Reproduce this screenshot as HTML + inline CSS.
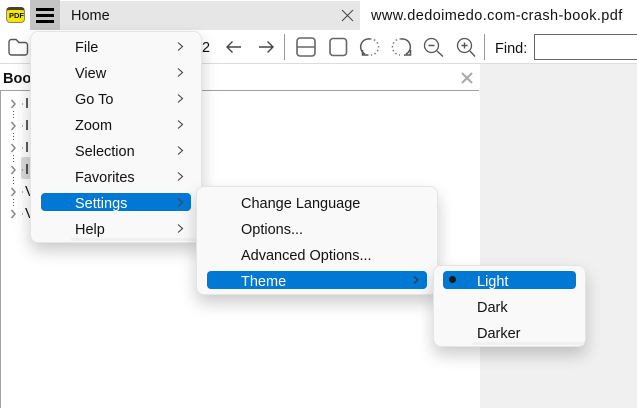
<!DOCTYPE html>
<html><head><meta charset="utf-8">
<style>
*{box-sizing:border-box}
html,body{margin:0;padding:0;width:637px;height:408px;overflow:hidden;background:#fff;font-family:"Liberation Sans",sans-serif;font-size:14.5px;color:#111}
.a{position:absolute}
.t{position:absolute;white-space:nowrap;line-height:18px;margin-top:1px}
.menu{position:absolute;background:#f9f9f9;border:1px solid #e4e4e4;border-radius:8px;box-shadow:0 8px 16px rgba(0,0,0,.2)}
.hl{position:absolute;background:#0078d4;border-radius:4px}
svg{position:absolute;overflow:visible}
</style></head><body>
<div class="a" style="left:60px;top:1px;width:300px;height:29px;background:#e6e6e6"></div>
<div class="a" style="left:30px;top:0;width:30px;height:30px;background:#c4c4c4"></div>
<div class="a" style="left:36px;top:8px;width:18px;height:3px;background:#000"></div>
<div class="a" style="left:36px;top:14px;width:18px;height:3px;background:#000"></div>
<div class="a" style="left:36px;top:20px;width:18px;height:3px;background:#000"></div>
<div class="a" style="left:6px;top:7px;width:19px;height:16px;background:#f7e600;border:1px solid #8a8a60;border-top:3px solid #4a4520;border-radius:4px"></div>
<div class="a" style="left:9px;top:10px;font-size:7.500px;font-weight:bold;line-height:12px;color:#1a1a00;white-space:nowrap">PDF</div>
<div class="t" style="left:71px;top:6px">Home</div>
<svg style="left:0;top:0" width="637" height="90" fill="none">
<path d="M342 10L353 21M353 10L342 21" stroke="#444" stroke-width="1"/>
<path d="M9 42a2.500 2.500 0 0 1 2.500-2.500H16l3 3h6A2.500 2.500 0 0 1 27.500 45V52.500a2.500 2.500 0 0 1-2.500 2.500H11.500A2.500 2.500 0 0 1 9 52.500Z" stroke="#555" stroke-width="1.400"/>
<path d="M241 47H227M232.500 41.500L227 47L232.500 52.500" stroke="#444" stroke-width="1.400"/>
<path d="M259 47H273M267.500 41.500L273 47L267.500 52.500" stroke="#444" stroke-width="1.400"/>
<path d="M284.500 34V60" stroke="#999" stroke-width="1"/>
<rect x="297" y="38" width="18" height="18" rx="3" stroke="#666" stroke-width="1.600"/>
<path d="M297 47H315" stroke="#666" stroke-width="1.600"/>
<rect x="330" y="38.500" width="16.500" height="17" rx="3" stroke="#666" stroke-width="1.600"/>
<path d="M365 54A8 8 0 0 1 370 39" stroke="#555" stroke-width="1.500"/>
<path d="M370 39A8 8 0 0 1 371 55" stroke="#777" stroke-width="1.500" stroke-dasharray="1.500 2.500"/>
<path d="M362.500 50V55H368.500" stroke="#555" stroke-width="1.500"/>
<path d="M406 54A8 8 0 0 0 401 39" stroke="#555" stroke-width="1.500"/>
<path d="M401 39A8 8 0 0 0 400 55" stroke="#777" stroke-width="1.500" stroke-dasharray="1.500 2.500"/>
<path d="M410.500 50V55H404" stroke="#555" stroke-width="1.500"/>
<circle cx="431.500" cy="45.500" r="7" stroke="#555" stroke-width="1.300"/><path d="M428.500 45.500H434.500M437 51L443 56.500" stroke="#555" stroke-width="1.400"/>
<circle cx="464.500" cy="45.500" r="7" stroke="#555" stroke-width="1.300"/><path d="M461.500 45.500H467.500M464.500 42.500V48.500M470 51L475 56.500" stroke="#555" stroke-width="1.400"/>
<path d="M484.500 34V60" stroke="#999" stroke-width="1"/>
<path d="M462 73L472 83M472 73L462 83" stroke="#aaa" stroke-width="2"/>
</svg>
<div class="t" style="left:371px;top:6px;letter-spacing:.41px">www.dedoimedo.com-crash-book.pdf</div>
<div class="t" style="left:495px;top:39px">Find:</div>
<div class="a" style="left:534px;top:34px;width:103px;height:26px;border:1px solid #666;border-right:0;background:#fff"></div>
<div class="t" style="left:202px;top:38px;font-size:14.500px">2</div>
<div class="a" style="left:0;top:63px;width:637px;height:1px;background:#ddd"></div>
<div class="a" style="left:480px;top:64px;width:157px;height:344px;background:#f0f0f0"></div>
<div class="t" style="left:3px;top:69px;font-weight:bold">Boo</div>
<div class="a" style="left:0;top:90px;width:479px;height:1px;background:#a0a0a0"></div>
<div class="a" style="left:0;top:90px;width:1px;height:318px;background:#a0a0a0"></div>
<div class="a" style="left:21px;top:157px;width:10px;height:22px;background:#d9d9d9;border-radius:2px"></div>
<svg style="left:0;top:0" width="32" height="230" fill="none">
<path d="M11.500 100L15 104L11.500 108M11.500 122L15 126L11.500 130M11.500 144L15 148L11.500 152M11.500 166L15 170L11.500 174M11.500 188L15 192L11.500 196M11.500 210L15 214L11.500 218" stroke="#888" stroke-width="1.500"/>
<path d="M13.500 111V119M13.500 133V141M13.500 155V163M13.500 177V185M13.500 199V207" stroke="#555" stroke-dasharray="1 2"/>
<path d="M22 104H24M22 126H24M22 148H24M22 170H24M22 192H24M22 214H24" stroke="#666" stroke-dasharray="1 1"/>
</svg>
<div class="t" style="left:25px;top:94px">I</div>
<div class="t" style="left:25px;top:116px">I</div>
<div class="t" style="left:25px;top:138px">I</div>
<div class="t" style="left:25px;top:160px">I</div>
<div class="t" style="left:25px;top:182px">V</div>
<div class="t" style="left:25px;top:204px">V</div>

<div class="menu" style="left:30px;top:31px;width:172px;height:212px"></div>
<div class="a" style="left:71px;top:238px;width:128px;height:3px;background:#f0f0f0"></div>
<div class="hl" style="left:41px;top:193px;width:150px;height:18px"></div>
<div class="t" style="left:75px;top:38px">File</div>
<div class="t" style="left:75px;top:64px">View</div>
<div class="t" style="left:75px;top:90px">Go To</div>
<div class="t" style="left:75px;top:116px">Zoom</div>
<div class="t" style="left:75px;top:142px">Selection</div>
<div class="t" style="left:75px;top:168px">Favorites</div>
<div class="t" style="left:75px;top:194px;color:#fff">Settings</div>
<div class="t" style="left:75px;top:220px">Help</div>
<svg style="left:0;top:0" width="200" height="240" fill="none">
<path d="M178 42.500L182.500 46.500L178 50.500M178 68.500L182.500 72.500L178 76.500M178 94.500L182.500 98.500L178 102.500M178 120.500L182.500 124.500L178 128.500M178 146.500L182.500 150.500L178 154.500M178 172.500L182.500 176.500L178 180.500M178 198.500L182.500 202.500L178 206.500M178 224.500L182.500 228.500L178 232.500" stroke="#444" stroke-width="1.100"/>
</svg>

<div class="menu" style="left:196px;top:186px;width:242px;height:109px"></div>
<div class="hl" style="left:207px;top:271px;width:220px;height:18px"></div>
<div class="t" style="left:241px;top:194px">Change Language</div>
<div class="t" style="left:241px;top:220px">Options...</div>
<div class="t" style="left:241px;top:246px">Advanced Options...</div>
<div class="t" style="left:241px;top:272px;color:#fff">Theme</div>
<svg style="left:0;top:0" width="430" height="290" fill="none"><path d="M414 276.500L418 280L414 283.500" stroke="#333" stroke-width="1.100"/></svg>

<div class="menu" style="left:433px;top:265px;width:153px;height:82px"></div>
<div class="a" style="left:473px;top:342px;width:111px;height:3px;background:#f0f0f0"></div>
<div class="hl" style="left:443px;top:271px;width:133px;height:18px"></div>
<div class="a" style="left:449px;top:276px;width:7px;height:7px;border-radius:50%;background:#1a1a1a"></div>
<div class="t" style="left:477px;top:272px;color:#fff">Light</div>
<div class="t" style="left:477px;top:298px">Dark</div>
<div class="t" style="left:477px;top:324px">Darker</div>
</body></html>
